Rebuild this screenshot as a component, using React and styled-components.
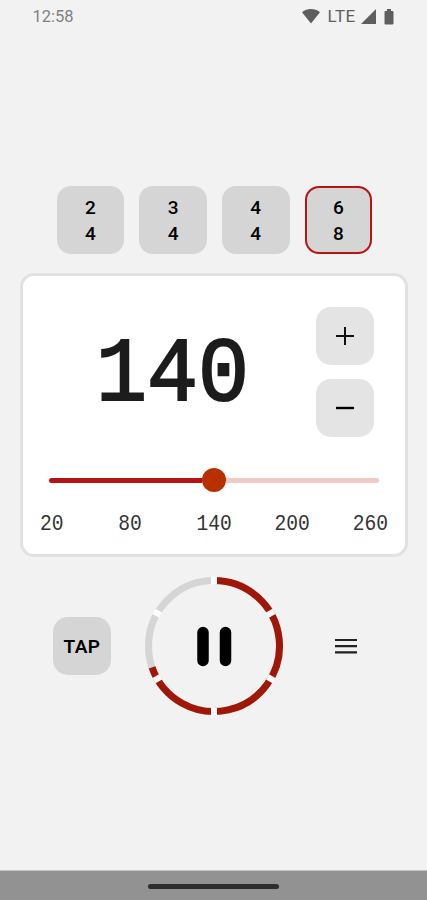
import { Fragment } from "react";
import styled, { createGlobalStyle } from "styled-components";

const GlobalStyle = createGlobalStyle`
  * {
    box-sizing: border-box;
  }

  body {
    margin: 0;
    background-color: #f2f2f2;
    overflow: hidden;
  }

  button {
    border: none;
    padding: 0;
    margin: 0;
    cursor: pointer;
  }
`;

const Screen = styled.div`
  display: flex;
  flex-direction: column;
  width: 427px;
  height: 900px;
  background-color: #f2f2f2;
  color: #000;
  font-family: Roboto, sans-serif;
`;

const StatusBar = styled.header`
  display: flex;
  justify-content: space-between;
  align-items: center;
  height: 32px;
  padding: 0 33px 0 32.5px;
`;

const Clock = styled.span`
  color: #808080;
  font-size: 16.5px;
`;

const StatusIcons = styled.div`
  display: flex;
  align-items: center;
  color: #5e5e5e;
`;

const Network = styled.span`
  margin: 0 5.5px 0 8px;
  font-size: 17px;
  letter-spacing: 0.4px;
`;

const Signatures = styled.div`
  display: flex;
  gap: 15px;
  margin: 154px 0 0 56.5px;
`;

const SignatureButton = styled.button`
  display: flex;
  flex-direction: column;
  align-items: center;
  justify-content: center;
  width: 67.7px;
  height: 68px;
  padding-top: 2px;
  border: 2px solid ${({ $active }) => ($active ? "#b81414" : "#d5d5d5")};
  border-radius: 14px;
  background-color: #d5d5d5;
  color: #000;
  font-family: Roboto, sans-serif;
  font-size: 19px;
  font-weight: 500;
  line-height: 26px;
`;

const Card = styled.section`
  width: 388px;
  height: 284px;
  margin: 19px 0 0 20px;
  border: 3px solid #e1e1e1;
  border-radius: 14px;
  background-color: #fff;
`;

const TempoRow = styled.div`
  display: flex;
  justify-content: space-between;
  align-items: center;
  height: 130px;
  margin-top: 31px;
  padding: 0 31px 0 73px;
`;

const Tempo = styled.div`
  padding-top: 8px;
  color: #1c1c1c;
  font-family: "Liberation Mono", monospace;
  font-size: 85px;
  line-height: 90px;
  -webkit-text-stroke: 2px #1c1c1c;
  transform: scaleY(1.07);
`;

const Steps = styled.div`
  display: flex;
  flex-direction: column;
  gap: 14px;
`;

const SquareButton = styled.button`
  display: flex;
  align-items: center;
  justify-content: center;
  width: 58px;
  height: 58px;
  border-radius: 15px;
  background-color: ${({ $dark }) => ($dark ? "#d5d5d5" : "#e4e4e4")};
  color: #000;
  font-family: Roboto, sans-serif;
  font-size: 19px;
  font-weight: 600;
  letter-spacing: 0.5px;
`;

const Slider = styled.div`
  display: flex;
  align-items: center;
  height: 24px;
  margin: 31px 26px 0 26px;
`;

const Track = styled.div`
  flex: ${({ $grow }) => $grow};
  height: 5px;
  border-radius: ${({ $filled }) => ($filled ? "3px 0 0 3px" : "0 2px 2px 0")};
  background-color: ${({ $filled }) => ($filled ? "#b51410" : "#f3c9c4")};
`;

const Thumb = styled.div`
  width: 24px;
  height: 24px;
  border-radius: 50%;
  background-color: #b93000;
`;

const Scale = styled.div`
  display: grid;
  grid-template-columns: repeat(5, 78.2px);
  margin: 20px 0 0 17px;
  color: #333;
  font-family: "Liberation Mono", monospace;
  font-size: 19.6px;
  line-height: 24px;
  transform: scaleY(1.12);
`;

const Controls = styled.div`
  display: flex;
  align-items: center;
  justify-content: space-between;
  height: 140px;
  margin: 19px 52px 0 53px;
`;

const PlainButton = styled.button`
  display: flex;
  align-items: center;
  justify-content: center;
  width: ${({ $size }) => $size}px;
  height: ${({ $size }) => $size}px;
  background: none;
`;

const NavigationBar = styled.footer`
  display: flex;
  align-items: center;
  justify-content: center;
  height: 30px;
  margin-top: auto;
  padding-top: 1px;
  border-top: 1px solid #c4c4c4;
  background-color: #929292;
`;

const HomeHandle = styled.div`
  width: 131px;
  height: 5px;
  border-radius: 3px;
  background-color: #2e2e2e;
`;

const signatures = [
  [2, 4],
  [3, 4],
  [4, 4],
  [6, 8],
];

const RADIUS = 65.5;

function point(angle, radius = RADIUS) {
  const rad = (angle * Math.PI) / 180;
  return `${70 + radius * Math.sin(rad)} ${70 - radius * Math.cos(rad)}`;
}

function arc(from, to) {
  return `M${point(from)} A${RADIUS} ${RADIUS} 0 ${to - from > 180 ? 1 : 0} 1 ${point(to)}`;
}

function BeatRing({ beats, progress }) {
  const marks = Array.from({ length: beats }, (_, i) => (i * 360) / beats);

  return (
    <svg width="140" height="140" viewBox="0 0 140 140" fill="none">
      <circle cx="70" cy="70" r={RADIUS} stroke="#d5d5d5" strokeWidth="7" />
      <path d={arc(0, progress)} stroke="#a01708" strokeWidth="7" />
      {marks.map((angle) => (
        <path
          key={angle}
          d={`M${point(angle, 61.7)} L${point(angle, 69.3)}`}
          stroke="#fcfcfc"
          strokeWidth="6"
        />
      ))}
      <path d="M59 56.5v28M81.5 56.5v28" stroke="#000" strokeWidth="11.5" strokeLinecap="round" />
    </svg>
  );
}

function App() {
  return (
    <Fragment>
      <GlobalStyle />
      <Screen>
        <StatusBar>
          <Clock>12:58</Clock>
          <StatusIcons>
            <svg width="18" height="16" viewBox="0 0 18 16" fill="currentColor">
              <path d="M0 4.2C5-.2 13-.2 18 4.2L9 15.5Z" />
            </svg>
            <Network>LTE</Network>
            <svg width="15" height="15" viewBox="0 0 15 15" fill="currentColor">
              <path d="M15 0v15H0Z" />
            </svg>
            <svg width="18" height="17" viewBox="0 0 18 17" fill="currentColor">
              <path d="M11 1h4v2h1.5q1 0 1 1v11.5q0 1-1 1h-7q-1 0-1-1V4q0-1 1-1H11Z" />
            </svg>
          </StatusIcons>
        </StatusBar>

        <Signatures>
          {signatures.map(([top, bottom]) => (
            <SignatureButton key={`${top}/${bottom}`} $active={top === 6}>
              <span>{top}</span>
              <span>{bottom}</span>
            </SignatureButton>
          ))}
        </Signatures>

        <Card>
          <TempoRow>
            <Tempo>140</Tempo>
            <Steps>
              <SquareButton aria-label="Increase tempo">
                <svg width="18" height="18" stroke="#111" strokeWidth="2">
                  <path d="M0 9h18M9 0v18" />
                </svg>
              </SquareButton>
              <SquareButton aria-label="Decrease tempo">
                <svg width="18" height="18" stroke="#000" strokeWidth="2.4">
                  <path d="M0 9h18" />
                </svg>
              </SquareButton>
            </Steps>
          </TempoRow>
          <Slider>
            <Track $grow={1} $filled />
            <Thumb />
            <Track $grow={1} />
          </Slider>
          <Scale>
            {[20, 80, 140, 200, 260].map((value) => (
              <span key={value}>{value}</span>
            ))}
          </Scale>
        </Card>

        <Controls>
          <SquareButton $dark>TAP</SquareButton>
          <PlainButton $size={140} aria-label="Pause">
            <BeatRing beats={6} progress={251} />
          </PlainButton>
          <PlainButton $size={58} aria-label="Menu">
            <svg width="22" height="16" stroke="#222" strokeWidth="2.2">
              <path d="M0 2h22M0 8.2h22M0 14.4h22" />
            </svg>
          </PlainButton>
        </Controls>

        <NavigationBar>
          <HomeHandle />
        </NavigationBar>
      </Screen>
    </Fragment>
  );
}

export default App;
